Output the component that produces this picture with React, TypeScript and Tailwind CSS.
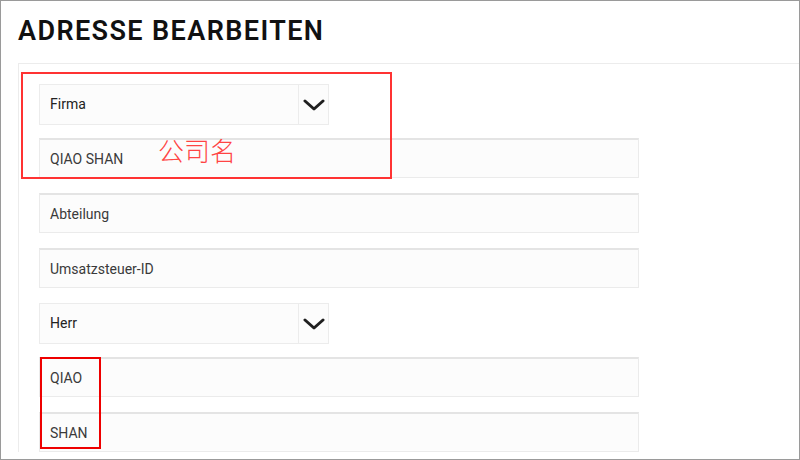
import React from 'react';

const Chevron: React.FC = () => (
    <svg width="22" height="12" viewBox="0 0 22 12" fill="none">
        <path d="M2 2l9 8 9-8" stroke="#1f1f1f" strokeWidth="3" strokeLinecap="round" strokeLinejoin="round" />
    </svg>
);

const SelectBox: React.FC<{ value: string }> = ({ value }) => (
    <div className="-mb-[2px] flex h-[41px] w-[290px] border border-[#ececec] bg-[#fcfcfc]">
        <div className="flex flex-1 items-center pl-[10px] text-[14px] text-[#222]">{value}</div>
        <div className="flex w-[30px] items-center justify-center border-l border-[#ececec]">
            <Chevron />
        </div>
    </div>
);

const TextInput: React.FC<{ value: string }> = ({ value }) => (
    <div className="flex h-[40px] w-[600px] items-center border border-t-2 border-[#ebebeb] border-t-[#e4e4e4] bg-[#fcfcfc] pl-[10px] pt-[2px] text-[14px] text-[#3a3a3a]">
        {value}
    </div>
);

const App: React.FC = () => {
    return (
        <div
            className="relative h-[460px] w-[800px] overflow-hidden border border-[#9a9a9a] bg-white"
            style={{ fontFamily: 'Roboto, "Noto Sans CJK SC", sans-serif' }}
        >
            <h1 className="pl-[17px] pt-[14px] text-[27px] font-semibold leading-[32px] tracking-[1.4px] text-[#111]">
                ADRESSE BEARBEITEN
            </h1>

            <div className="ml-[17px] mt-[16px] border-l border-t border-[#ececec] pl-[20px] pt-[20px]">
                <div className="flex flex-col gap-[15px]">
                    <SelectBox value="Firma" />
                    <TextInput value="QIAO SHAN" />
                    <TextInput value="Abteilung" />
                    <TextInput value="Umsatzsteuer-ID" />
                    <SelectBox value="Herr" />
                    <TextInput value="QIAO" />
                    <TextInput value="SHAN" />
                </div>
            </div>

            {/* annotations */}
            <div className="absolute left-[20px] top-[71px] h-[107px] w-[371px] border-2 border-[#f33]" />
            <div className="absolute left-[157px] top-[131px] text-[26px] leading-[36px] text-[#f44]" style={{ fontFamily: '"Noto Sans CJK SC", sans-serif', fontWeight: 300 }}>
                公司名
            </div>
            <div className="absolute left-[39px] top-[356px] h-[92px] w-[61px] border-2 border-[#e00]" />
        </div>
    );
};

export default App;
